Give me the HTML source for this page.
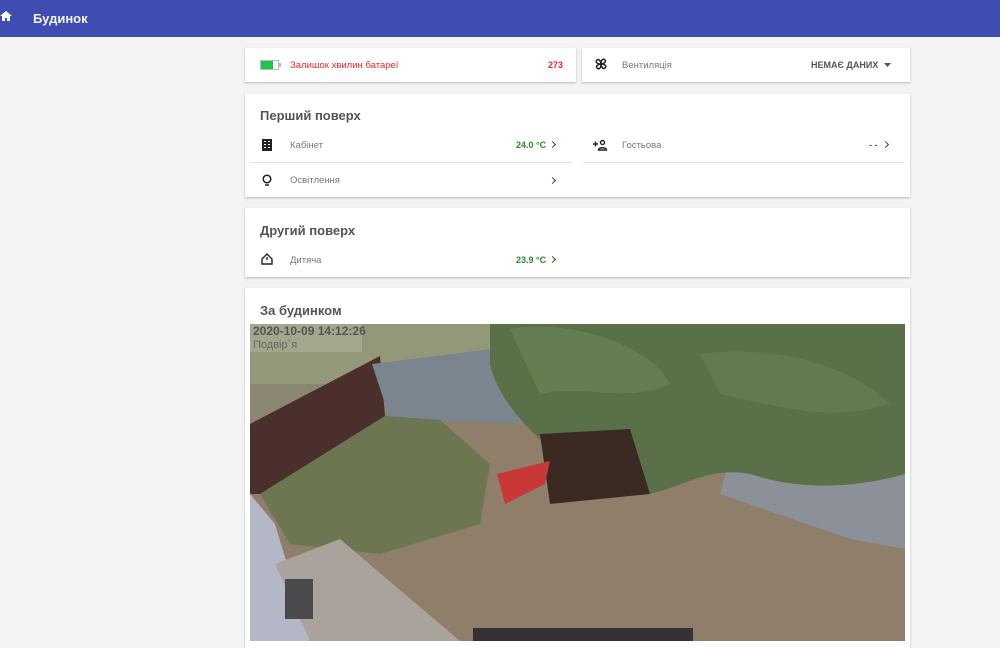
<!DOCTYPE html>
<html><head><meta charset="utf-8"><style>
*{box-sizing:border-box;margin:0;padding:0}
body{width:1000px;height:641px;overflow:hidden;background:#f3f3f3;font-family:"Liberation Sans",sans-serif;position:relative}
.hdr{position:absolute;left:0;top:0;width:1000px;height:37px;background:#3f4db2;color:#fff}
.hdr .t{position:absolute;left:33px;top:11px;font-size:13px;font-weight:bold;color:#f4f4ff}
.card{position:absolute;background:#fff;box-shadow:0 1px 2px rgba(0,0,0,.25)}
.ttl{position:absolute;left:15px;font-size:13px;color:#555;font-weight:bold}
.val{position:absolute;font-size:9px;font-weight:bold}
.chev{position:absolute;width:5px;height:5px;border-right:1.5px solid #444;border-top:1.5px solid #444;transform:rotate(45deg)}
.sep{position:absolute;height:1px;background:#e4e4e4}
.lbl{position:absolute;font-size:9.5px;color:#777}
</style></head><body>
<div class="hdr">
<svg style="position:absolute;left:0;top:10px" width="12" height="12" viewBox="0 0 12 12"><path d="M6 1L0 6h2v5h3V8h2v3h3V6h2z" fill="#fff"/></svg>
<div class="t">Будинок</div></div>

<div class="card" style="left:245px;top:48px;width:331px;height:34px">
<svg style="position:absolute;left:15px;top:12px" width="22" height="10"><rect x="0.5" y="0.5" width="18" height="9" fill="#fff" stroke="#bbb"/><rect x="1" y="1" width="12" height="8" fill="#1fc44a"/><rect x="19" y="3" width="2" height="4" fill="#bbb"/></svg>
<div style="position:absolute;left:45px;top:12px;font-size:9.5px;color:#f02828">Залишок хвилин батареї</div>
<div class="val" style="left:303px;top:12px;color:#f02828">273</div>
</div>
<div class="card" style="left:582px;top:48px;width:328px;height:34px">
<svg style="position:absolute;left:12px;top:9px" width="14" height="14" viewBox="0 0 14 14" fill="none" stroke="#222" stroke-width="1.5"><path d="M7 7C7 3 9 1 11 3S9 7 7 7zM7 7C11 7 13 9 11 11S7 9 7 7zM7 7C7 11 5 13 3 11S5 7 7 7zM7 7C3 7 1 5 3 3S7 5 7 7z"/></svg>
<div class="lbl" style="left:40px;top:12px">Вентиляція</div>
<div class="val" style="left:229px;top:12px;color:#555">НЕМАЄ ДАНИХ</div>
<svg style="position:absolute;left:302px;top:15px" width="7" height="4"><path d="M0 0h7L3.5 4z" fill="#555"/></svg>
</div>

<div class="card" style="left:245px;top:94px;width:665px;height:103px">
<div class="ttl" style="top:14px">Перший поверх</div>
<svg style="position:absolute;left:17px;top:45px" width="10" height="12"><rect width="10" height="12" fill="#222"/><g fill="#fff"><rect x="2" y="2" width="2" height="1"/><rect x="6" y="2" width="2" height="1"/><rect x="2" y="5" width="2" height="1"/><rect x="6" y="5" width="2" height="1"/><rect x="2" y="8" width="2" height="1"/><rect x="6" y="8" width="2" height="1"/></g></svg>
<div class="lbl" style="left:45px;top:46px">Кабінет</div>
<div class="val" style="left:271px;top:46px;color:#2a8a2a">24.0 °C</div>
<div class="chev" style="left:305px;top:48px"></div>
<div class="sep" style="left:5px;top:68px;width:322px"></div>
<svg style="position:absolute;left:17px;top:80px" width="10" height="13" viewBox="0 0 10 13" fill="none" stroke="#222" stroke-width="1.5"><circle cx="5" cy="5" r="3.8"/><path d="M3 11h4"/></svg>
<div class="lbl" style="left:45px;top:81px">Освітлення</div>
<div class="chev" style="left:305px;top:84px"></div>
<svg style="position:absolute;left:348px;top:45px" width="15" height="12" viewBox="0 0 15 12" fill="none" stroke="#222" stroke-width="1.4"><path d="M0 5h5M2.5 2.5v5"/><circle cx="9.5" cy="3.5" r="2"/><path d="M5.5 11c0-3 8-3 8 0z"/></svg>
<div class="lbl" style="left:377px;top:46px">Гостьова</div>
<div class="val" style="left:624px;top:46px;color:#555">- -</div>
<div class="chev" style="left:638px;top:48px"></div>
<div class="sep" style="left:338px;top:68px;width:322px"></div>
</div>

<div class="card" style="left:245px;top:208px;width:665px;height:69px">
<div class="ttl" style="top:15px">Другий поверх</div>
<svg style="position:absolute;left:16px;top:45px" width="12" height="12" viewBox="0 0 12 12" fill="none" stroke="#222" stroke-width="1.4"><path d="M1 6L6 1l5 5v5H1z"/><path d="M6 4v3"/></svg>
<div class="lbl" style="left:45px;top:47px">Дитяча</div>
<div class="val" style="left:271px;top:47px;color:#2a8a2a">23.9 °C</div>
<div class="chev" style="left:305px;top:49px"></div>
</div>

<div class="card" style="left:245px;top:288px;width:665px;height:360px">
<div class="ttl" style="top:15px">За будинком</div>
<svg style="position:absolute;left:5px;top:36px" width="655" height="317" viewBox="0 0 655 317">
<rect width="655" height="317" fill="#8a8672"/>
<rect width="655" height="60" fill="#929878"/>
<polygon points="0,160 130,90 240,80 500,120 655,150 655,317 0,317" fill="#8f7e6a"/>
<polygon points="0,100 130,32 135,92 10,170 0,170" fill="#4b2f2d"/>
<polygon points="122,40 250,24 310,70 300,100 140,95" fill="#7a8590"/>
<polygon points="10,170 135,92 190,96 240,140 230,200 130,230 40,220" fill="#6c7650"/>
<polygon points="490,95 655,115 655,225 600,215 470,170" fill="#8c9098"/>
<path d="M240 0H655V150C620 160 560 170 500 150C450 140 420 175 380 170C320 150 250 90 240 40Z" fill="#5a7048"/>
<path d="M260 5C320 -5 400 20 420 60C380 80 330 60 290 70Z" fill="#6e8458" opacity=".6"/>
<path d="M450 30C520 20 600 40 640 80C580 100 520 80 470 70Z" fill="#66805a" opacity=".6"/>
<polygon points="290,110 380,105 400,170 300,180" fill="#3a2a22"/>
<polygon points="247,150 300,137 295,160 255,180" fill="#c83838"/>
<polygon points="0,170 25,200 60,317 0,317" fill="#b4b8c6"/>
<polygon points="25,240 90,215 210,317 60,317" fill="#a9a39b"/>
<rect x="35" y="255" width="28" height="40" fill="#4a4a4c"/>
<rect x="0" y="0" width="112" height="28" fill="#b8b4a4" opacity=".5"/>
<rect x="223" y="304" width="220" height="13" fill="#333"/>
</svg>
<div style="position:absolute;left:8px;top:36px;font-size:12px;font-weight:bold;color:#555">2020-10-09 14:12:26</div>
<div style="position:absolute;left:8px;top:51px;font-size:11px;color:#666">Подвір`я</div>
</div>
</body></html>
